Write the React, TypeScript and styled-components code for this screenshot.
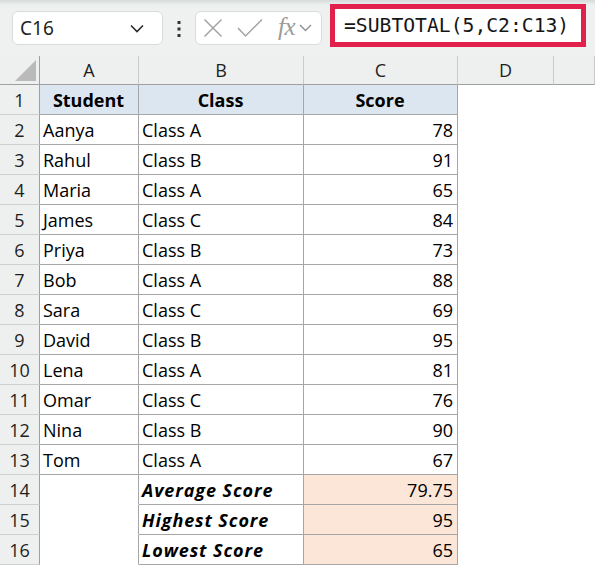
import React from "react";
import styled, { createGlobalStyle } from "styled-components";

const Global = createGlobalStyle`
  html, body { margin: 0; padding: 0; background: #ffffff; }
  #root { width: 595px; height: 566px; overflow: hidden; }
`;

const Page = styled.div`
  width: 595px;
  height: 566px;
  display: flex;
  flex-direction: column;
  background: #ffffff;
`;

const Toolbar = styled.div`
  height: 56px;
  flex: none;
  display: flex;
  align-items: flex-start;
  background: linear-gradient(#d6dad9 0px, #e9ecec 4px, #eef1f0 6px, #eef1f0 100%);
  box-sizing: border-box;
  padding-left: 12px;
`;

const NameBox = styled.div`
  margin-top: 11px;
  width: 151px;
  height: 34px;
  box-sizing: border-box;
  background: #ffffff;
  border: 1px solid #d9dcdc;
  border-radius: 6px;
  display: flex;
  align-items: center;
  justify-content: space-between;
  padding: 0 18px 0 7px;
  font-family: "Noto Sans", "Open Sans", sans-serif;
  font-size: 19px;
  color: #1f1f1f;
`;

const Dots = styled.div`
  width: 32px;
  height: 56px;
  display: flex;
  align-items: flex-start;
  justify-content: center;
  padding-top: 21px;
  box-sizing: border-box;
`;

const FxBox = styled.div`
  margin-top: 11px;
  width: 127px;
  height: 34px;
  box-sizing: border-box;
  background: #ffffff;
  border: 1px solid #d9dcdc;
  border-radius: 6px;
  display: flex;
  align-items: center;
  padding-left: 7px;
`;

const FxLabel = styled.span`
  font-family: "Liberation Serif", "DejaVu Serif", serif;
  font-style: italic;
  font-size: 25px;
  color: #9b9b9b;
  margin-left: 15px;
  letter-spacing: -0.5px;
  line-height: 1;
  margin-top: -3px;
`;

const FormulaBox = styled.div`
  margin-left: 8px;
  margin-top: 4px;
  width: 256px;
  height: 43px;
  box-sizing: border-box;
  border: 5px solid #e2204c;
  background: #ffffff;
  display: flex;
  align-items: center;
  padding-left: 9px;
  font-family: "DejaVu Sans Mono", "Liberation Mono", monospace;
  font-size: 19.7px;
  color: #161616;
  white-space: nowrap;
`;

const Sheet = styled.div`
  display: grid;
  grid-template-columns: 40px 99px 165px 154px 96px 1fr;
  grid-template-rows: 29px repeat(16, 30px);
  font-family: "Open Sans", "Noto Sans", sans-serif;
  font-size: 18px;
  color: #000000;
`;

const Corner = styled.div`
  background: #eef0ef;
  border-right: 1px solid #a0a0a0;
  border-bottom: 1px solid #a0a0a0;
  box-sizing: border-box;
  position: relative;
`;

const Triangle = styled.div`
  position: absolute;
  right: 3px;
  bottom: 3px;
  width: 0;
  height: 0;
  border-left: 21px solid transparent;
  border-bottom: 21px solid #bababa;
`;

const ColHead = styled.div`
  background: #eef0ef;
  border-right: 1px solid #c9cbca;
  border-bottom: 1px solid #a0a0a0;
  box-sizing: border-box;
  text-align: center;
  line-height: 28px;
  color: #1e1e1e;
`;

const RowHead = styled.div`
  background: #eef0ef;
  border-right: 1px solid #a0a0a0;
  border-bottom: 1px solid #cfd1d0;
  box-sizing: border-box;
  text-align: center;
  line-height: 30px;
  color: #1e1e1e;
`;

const Cell = styled.div<{
  $bold?: boolean;
  $italic?: boolean;
  $align?: "left" | "center" | "right";
  $fill?: string;
  $right?: boolean;
  $bottom?: boolean;
}>`
  box-sizing: border-box;
  background: ${(p) => p.$fill ?? "#ffffff"};
  border-right: 1px solid ${(p) => (p.$right ? "#a6a6a6" : "transparent")};
  border-bottom: 1px solid ${(p) => (p.$bottom ? "#a6a6a6" : "transparent")};
  font-weight: ${(p) => (p.$bold ? 700 : 400)};
  font-style: ${(p) => (p.$italic ? "italic" : "normal")};
  letter-spacing: ${(p) => (p.$italic ? "0.9px" : "normal")};
  text-align: ${(p) => p.$align ?? "left"};
  line-height: 30px;
  padding: 0 4px 0 3px;
  white-space: nowrap;
  overflow: hidden;
`;

const Chevron = () => (
  <svg width="14" height="9" viewBox="0 0 14 9" fill="none">
    <path d="M1 1.5 L7 7.5 L13 1.5" stroke="#2b2b2b" strokeWidth="1.6" />
  </svg>
);

const VDots = () => (
  <svg width="4" height="16" viewBox="0 0 4 16">
    <rect x="0.5" y="0" width="3" height="3" fill="#333" />
    <rect x="0.5" y="6.5" width="3" height="3" fill="#333" />
    <rect x="0.5" y="13" width="3" height="3" fill="#333" />
  </svg>
);

const CrossIcon = () => (
  <svg width="20" height="20" viewBox="0 0 20 20" fill="none">
    <path d="M1.5 1.5 L18.5 18.5 M18.5 1.5 L1.5 18.5" stroke="#a3a3a3" strokeWidth="1.5" />
  </svg>
);

const CheckIcon = () => (
  <svg width="26" height="20" viewBox="0 0 26 20" fill="none" style={{ marginLeft: 14 }}>
    <path d="M1 10 L8.5 18 L25 1.5" stroke="#a3a3a3" strokeWidth="1.5" />
  </svg>
);

const SmallChevron = () => (
  <svg width="13" height="8" viewBox="0 0 13 8" fill="none" style={{ marginLeft: 4 }}>
    <path d="M1 1 L6.5 6.5 L12 1" stroke="#8f8f8f" strokeWidth="1.4" />
  </svg>
);

type Row = { a: string; b: string; c: string };

const data: Row[] = [
  { a: "Aanya", b: "Class A", c: "78" },
  { a: "Rahul", b: "Class B", c: "91" },
  { a: "Maria", b: "Class A", c: "65" },
  { a: "James", b: "Class C", c: "84" },
  { a: "Priya", b: "Class B", c: "73" },
  { a: "Bob", b: "Class A", c: "88" },
  { a: "Sara", b: "Class C", c: "69" },
  { a: "David", b: "Class B", c: "95" },
  { a: "Lena", b: "Class A", c: "81" },
  { a: "Omar", b: "Class C", c: "76" },
  { a: "Nina", b: "Class B", c: "90" },
  { a: "Tom", b: "Class A", c: "67" },
];

const summary = [
  { label: "Average Score", value: "79.75" },
  { label: "Highest Score", value: "95" },
  { label: "Lowest Score", value: "65" },
];

const HEAD_FILL = "#dce6f0";
const SUM_FILL = "#fbe6d7";

export default function App() {
  return (
    <Page>
      <Global />
      <Toolbar>
        <NameBox>
          <span>C16</span>
          <Chevron />
        </NameBox>
        <Dots>
          <VDots />
        </Dots>
        <FxBox>
          <CrossIcon />
          <CheckIcon />
          <FxLabel>fx</FxLabel>
          <SmallChevron />
        </FxBox>
        <FormulaBox>=SUBTOTAL(5,C2:C13)</FormulaBox>
      </Toolbar>
      <Sheet>
        <Corner>
          <Triangle />
        </Corner>
        {["A", "B", "C", "D", ""].map((l, i) => (
          <ColHead key={i}>{l}</ColHead>
        ))}

        <RowHead>1</RowHead>
        <Cell $bold $align="center" $fill={HEAD_FILL} $right $bottom>Student</Cell>
        <Cell $bold $align="center" $fill={HEAD_FILL} $right $bottom>Class</Cell>
        <Cell $bold $align="center" $fill={HEAD_FILL} $right $bottom>Score</Cell>
        <Cell />
        <Cell />

        {data.map((r, i) => (
          <React.Fragment key={r.a}>
            <RowHead>{i + 2}</RowHead>
            <Cell $right $bottom>{r.a}</Cell>
            <Cell $right $bottom>{r.b}</Cell>
            <Cell $align="right" $right $bottom>{r.c}</Cell>
            <Cell />
            <Cell />
          </React.Fragment>
        ))}

        {summary.map((s, i) => (
          <React.Fragment key={s.label}>
            <RowHead>{i + 14}</RowHead>
            <Cell $right />
            <Cell $bold $italic $right $bottom>{s.label}</Cell>
            <Cell $align="right" $fill={SUM_FILL} $right $bottom>{s.value}</Cell>
            <Cell />
            <Cell />
          </React.Fragment>
        ))}
      </Sheet>
    </Page>
  );
}
